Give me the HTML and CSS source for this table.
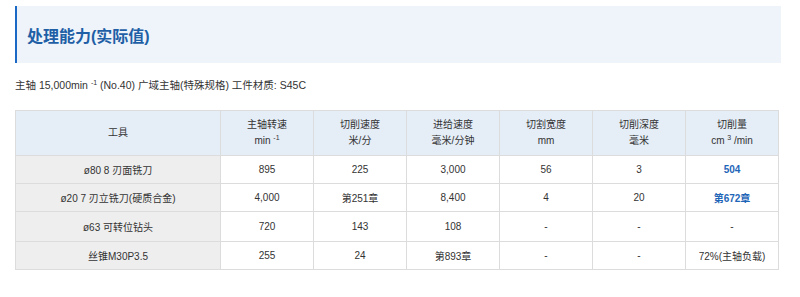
FILE: index.html
```html
<!DOCTYPE html>
<html lang="zh">
<head>
<meta charset="utf-8">
<link rel="stylesheet" href="styles.css">
</head>
<body>
<div class="page">
  <div class="heading"><h2>处理能力(实际值)</h2></div>
  <p class="note">主轴 15,000min <sup>-1</sup> (No.40) 广域主轴(特殊规格) 工件材质: S45C</p>
  <table class="spec">
    <colgroup>
      <col class="c-tool"><col><col><col><col><col><col>
    </colgroup>
    <thead>
      <tr>
        <th>工具</th>
        <th>主轴转速<br>min <sup>-1</sup></th>
        <th>切削速度<br>米/分</th>
        <th>进给速度<br>毫米/分钟</th>
        <th>切割宽度<br>mm</th>
        <th>切削深度<br>毫米</th>
        <th>切削量<br>cm <sup>3</sup> /min</th>
      </tr>
    </thead>
    <tbody>
      <tr class="r1">
        <td class="tool">ø80 8 刃面铣刀</td>
        <td>895</td><td>225</td><td>3,000</td><td>56</td><td>3</td><td class="hl">504</td>
      </tr>
      <tr class="r2">
        <td class="tool">ø20 7 刃立铣刀(硬质合金)</td>
        <td>4,000</td><td>第251章</td><td>8,400</td><td>4</td><td>20</td><td class="hl">第672章</td>
      </tr>
      <tr class="r3">
        <td class="tool">ø63 可转位钻头</td>
        <td>720</td><td>143</td><td>108</td><td>-</td><td>-</td><td>-</td>
      </tr>
      <tr class="r4">
        <td class="tool">丝锥M30P3.5</td>
        <td>255</td><td>24</td><td>第893章</td><td>-</td><td>-</td><td>72%(主轴负载)</td>
      </tr>
    </tbody>
  </table>
</div>
</body>
</html>
```
FILE: styles.css
```css
html, body {
  margin: 0;
  padding: 0;
  background: #ffffff;
}
body {
  font-family: "Liberation Sans", "Noto Sans CJK SC", sans-serif;
  color: #333333;
}
.page {
  padding: 6px 0 0 15px;
}
.heading {
  width: 766px;
  height: 57px;
  background: #eef4fa;
  border-left: 2px solid #1a69c4;
  display: flex;
  align-items: center;
  padding-left: 10px;
  box-sizing: border-box;
}
.heading h2 {
  margin: 0;
  font-size: 16px;
  font-weight: bold;
  color: #1f5fa6;
}
.note {
  margin: 14px 0 0 0;
  font-size: 10.5px;
  line-height: 16px;
  color: #333333;
}
sup {
  font-size: 7px;
  vertical-align: 4px;
  line-height: 0;
}
.spec {
  margin-top: 17px;
  width: 764px;
  border-collapse: collapse;
  table-layout: fixed;
  font-size: 10px;
  color: #333333;
}
.c-tool {
  width: 205px;
}
.spec th, .spec td {
  border: 1px solid #dcdcdc;
  text-align: center;
  padding: 0;
}
.spec th {
  background: #e5edf7;
  font-weight: normal;
  height: 44px;
  line-height: 16px;
}
.spec td {
  height: 27px;
  background: #ffffff;
}
.spec td.tool {
  background: #eeeeee;
}
.spec tr.r3 td {
  height: 29px;
}
.spec td.hl {
  color: #1f66b8;
  font-weight: bold;
}
```
